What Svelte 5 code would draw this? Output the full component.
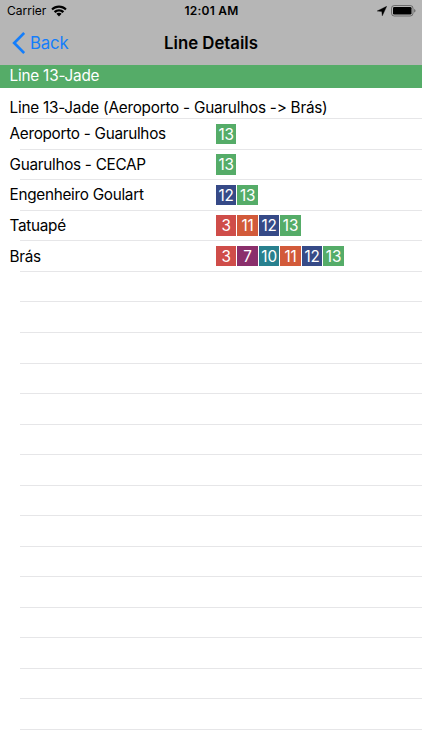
<script lang="ts">
	type Station = { name: string; lines: number[] };

	const title = 'Line 13-Jade';
	const direction = 'Line 13-Jade (Aeroporto - Guarulhos -> Brás)';

	const stations: Station[] = [
		{ name: 'Aeroporto - Guarulhos', lines: [13] },
		{ name: 'Guarulhos - CECAP', lines: [13] },
		{ name: 'Engenheiro Goulart', lines: [12, 13] },
		{ name: 'Tatuapé', lines: [3, 11, 12, 13] },
		{ name: 'Brás', lines: [3, 7, 10, 11, 12, 13] }
	];

	// unused rows keep their separators, like a plain table view
	const emptyRows = Array.from({ length: 16 });
</script>

<div class="screen">
	<header>
		<div class="status-bar">
			<div class="carrier">
				<span>Carrier</span>
				<svg class="wifi" viewBox="0 0 16 12" width="16" height="12">
					<path d="M8 .6C5 .6 2.3 1.8.3 3.7l1.5 1.6C3.5 3.7 5.6 2.8 8 2.8s4.5.9 6.2 2.5l1.5-1.6C13.7 1.8 11 .6 8 .6z" />
					<path d="M8 4.2c-2 0-3.8.8-5.2 2.1l1.6 1.6C5.3 7 6.6 6.4 8 6.4s2.7.6 3.6 1.5l1.6-1.6C11.8 5 10 4.2 8 4.2z" />
					<path d="M8 7.8c-1 0-1.9.4-2.6 1L8 11.5l2.6-2.7c-.7-.6-1.6-1-2.6-1z" />
				</svg>
			</div>
			<div class="time">12:01 AM</div>
			<div class="indicators">
				<svg class="location" viewBox="0 0 10 10" width="10" height="10">
					<path d="M9.7.3L5.3 9.8 4.8 5.4.2 5z" stroke="#000" stroke-width=".4" />
				</svg>
				<svg class="battery" viewBox="0 0 25 12" width="25" height="12">
					<rect x=".5" y=".5" width="21.5" height="10.5" rx="2.8" fill="none" stroke="#000" stroke-opacity=".4" />
					<rect x="2" y="2" width="18.5" height="7.5" rx="1.3" />
					<path d="M23.2 4v3.6c.8-.3 1.3-1 1.3-1.8s-.5-1.5-1.3-1.8z" fill-opacity=".45" />
				</svg>
			</div>
		</div>
		<nav>
			<button class="back">
				<svg viewBox="0 0 13 22" width="13" height="22">
					<path d="M12.2 1L2.2 11l10 10" fill="none" stroke="currentColor" stroke-width="2.7" />
				</svg>
				<span>Back</span>
			</button>
			<h1>Line Details</h1>
		</nav>
	</header>

	<div class="line-banner">{title}</div>
	<div class="direction"><span>{direction}</span></div>

	<ul>
		{#each stations as station}
			<li>
				<span class="name">{station.name}</span>
				<span class="badges">
					{#each station.lines as line}
						<span class="badge line-{line}">{line}</span>
					{/each}
				</span>
			</li>
		{/each}
		{#each emptyRows as _}
			<li></li>
		{/each}
	</ul>
</div>

<style>
	.screen {
		height: 750px;
		overflow: hidden;
		background: #fff;
		color: #000;
		font-family: Inter, sans-serif;
		font-size: 15.3px;
		font-feature-settings: 'calt' 0;
	}

	header {
		height: 65px;
		background: #b6b6b6;
	}

	.status-bar {
		display: grid;
		grid-template-columns: 1fr auto 1fr;
		align-items: center;
		height: 21px;
		padding: 0 6px 0 7px;
		font-size: 12px;
	}

	.carrier,
	.indicators {
		display: flex;
		align-items: center;
	}

	.carrier {
		gap: 5px;
	}

	.time {
		font-weight: 600;
		letter-spacing: 0.25px;
	}

	.indicators {
		justify-content: flex-end;
		gap: 4px;
	}

	nav {
		display: grid;
		grid-template-columns: 1fr auto 1fr;
		align-items: center;
		height: 44px;
		padding: 0 12px;
	}

	.back {
		display: flex;
		align-items: center;
		gap: 5px;
		padding: 0;
		border: 0;
		background: none;
		color: #147efb;
		font: inherit;
		font-size: 16.8px;
		letter-spacing: -0.15px;
	}

	h1 {
		margin: 0;
		font-size: 16.8px;
		font-weight: 600;
	}

	.line-banner {
		height: 23px;
		padding-left: 9.5px;
		background: #55ac68;
		color: #fff;
		letter-spacing: -0.2px;
		line-height: 21px;
	}

	.direction {
		height: 30.4px;
		padding-left: 9.5px;
		letter-spacing: -0.23px;
		line-height: 39px;
		white-space: nowrap;
	}

	ul {
		margin: 0;
		padding: 0;
		list-style: none;
	}

	li {
		display: flex;
		box-sizing: border-box;
		align-items: center;
		height: 30.53px;
		padding: 0.6px 0 0 9.5px;
		background: linear-gradient(#e6e6e8, #e6e6e8) 20px 0 / 100% 1px no-repeat;
	}

	.name {
		width: 206.5px;
		letter-spacing: -0.28px;
	}

	.badges {
		display: flex;
		gap: 1.2px;
	}

	.badge {
		width: 20.3px;
		height: 20.5px;
		color: #fff;
		letter-spacing: -0.1px;
		line-height: 21px;
		text-align: center;
	}

	.line-3 {
		background: #cf4d49;
	}

	.line-7 {
		background: #8a2f6b;
	}

	.line-10 {
		background: #28808e;
	}

	.line-11 {
		background: #d25a3a;
	}

	.line-12 {
		background: #364a87;
	}

	.line-13 {
		background: #55ac68;
	}
</style>
